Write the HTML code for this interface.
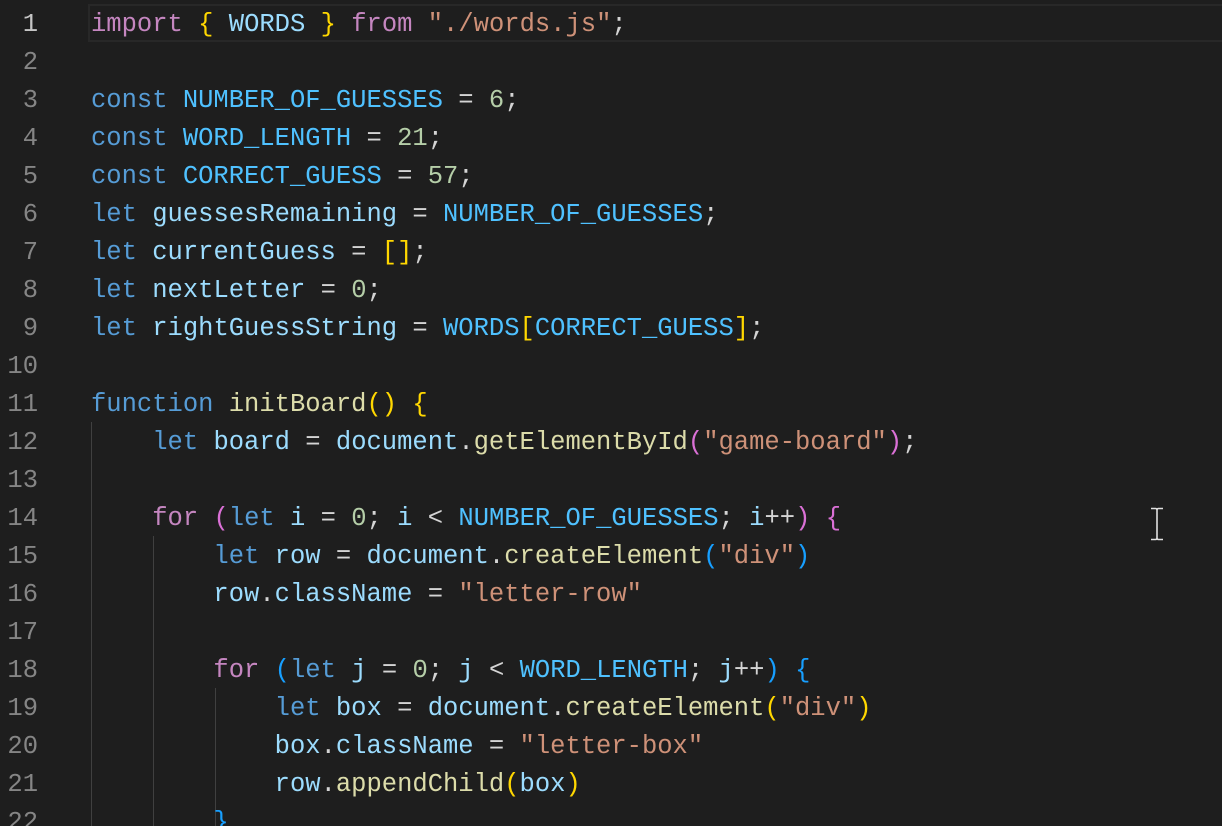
<!DOCTYPE html>
<html><head><meta charset="utf-8"><style>
html,body{margin:0;padding:0;background:#1e1e1e;width:1222px;height:826px;overflow:hidden}
.ed{position:relative;font-family:"Liberation Mono",monospace;font-size:25.5px;}
.l{position:absolute;left:0;height:38px;line-height:38px;white-space:pre;width:1222px;margin-top:2px}
.n{position:absolute;left:0;width:38px;text-align:right;color:#858585}
.c{position:absolute;left:91px;color:#d4d4d4}
.act{position:absolute;left:88px;top:4px;width:1140px;height:38px;border:2px solid #282828;box-sizing:border-box}
.g{position:absolute;width:1px;background:#404040}
.k{color:#569cd6}.p{color:#c586c0}.v{color:#9cdcfe}.C{color:#4fc1ff}.s{color:#ce9178}.nm{color:#b5cea8}.f{color:#dcdcaa}
.b1{color:#ffd700}.b2{color:#da70d6}.b3{color:#179fff}
</style></head><body><div class="ed">
<div class="act"></div>
<div class="g" style="left:91px;top:422px;height:404px"></div>
<div class="g" style="left:153px;top:536px;height:290px"></div>
<div class="g" style="left:215px;top:688px;height:138px"></div>
<div class="l" style="top:4px"><span class="n" style="color:#c6c6c6">1</span><span class="c"><span class="p">import</span> <span class="b1">{</span> <span class="v">WORDS</span> <span class="b1">}</span> <span class="p">from</span> <span class="s">"./words.js"</span>;</span></div>
<div class="l" style="top:42px"><span class="n">2</span></div>
<div class="l" style="top:80px"><span class="n">3</span><span class="c"><span class="k">const</span> <span class="C">NUMBER_OF_GUESSES</span> = <span class="nm">6</span>;</span></div>
<div class="l" style="top:118px"><span class="n">4</span><span class="c"><span class="k">const</span> <span class="C">WORD_LENGTH</span> = <span class="nm">21</span>;</span></div>
<div class="l" style="top:156px"><span class="n">5</span><span class="c"><span class="k">const</span> <span class="C">CORRECT_GUESS</span> = <span class="nm">57</span>;</span></div>
<div class="l" style="top:194px"><span class="n">6</span><span class="c"><span class="k">let</span> <span class="v">guessesRemaining</span> = <span class="C">NUMBER_OF_GUESSES</span>;</span></div>
<div class="l" style="top:232px"><span class="n">7</span><span class="c"><span class="k">let</span> <span class="v">currentGuess</span> = <span class="b1">[]</span>;</span></div>
<div class="l" style="top:270px"><span class="n">8</span><span class="c"><span class="k">let</span> <span class="v">nextLetter</span> = <span class="nm">0</span>;</span></div>
<div class="l" style="top:308px"><span class="n">9</span><span class="c"><span class="k">let</span> <span class="v">rightGuessString</span> = <span class="C">WORDS</span><span class="b1">[</span><span class="C">CORRECT_GUESS</span><span class="b1">]</span>;</span></div>
<div class="l" style="top:346px"><span class="n">10</span></div>
<div class="l" style="top:384px"><span class="n">11</span><span class="c"><span class="k">function</span> <span class="f">initBoard</span><span class="b1">()</span> <span class="b1">{</span></span></div>
<div class="l" style="top:422px"><span class="n">12</span><span class="c">    <span class="k">let</span> <span class="v">board</span> = <span class="v">document</span>.<span class="f">getElementById</span><span class="b2">(</span><span class="s">"game-board"</span><span class="b2">)</span>;</span></div>
<div class="l" style="top:460px"><span class="n">13</span></div>
<div class="l" style="top:498px"><span class="n">14</span><span class="c">    <span class="p">for</span> <span class="b2">(</span><span class="k">let</span> <span class="v">i</span> = <span class="nm">0</span>; <span class="v">i</span> &lt; <span class="C">NUMBER_OF_GUESSES</span>; <span class="v">i</span>++<span class="b2">)</span> <span class="b2">{</span></span></div>
<div class="l" style="top:536px"><span class="n">15</span><span class="c">        <span class="k">let</span> <span class="v">row</span> = <span class="v">document</span>.<span class="f">createElement</span><span class="b3">(</span><span class="s">"div"</span><span class="b3">)</span></span></div>
<div class="l" style="top:574px"><span class="n">16</span><span class="c">        <span class="v">row</span>.<span class="v">className</span> = <span class="s">"letter-row"</span></span></div>
<div class="l" style="top:612px"><span class="n">17</span></div>
<div class="l" style="top:650px"><span class="n">18</span><span class="c">        <span class="p">for</span> <span class="b3">(</span><span class="k">let</span> <span class="v">j</span> = <span class="nm">0</span>; <span class="v">j</span> &lt; <span class="C">WORD_LENGTH</span>; <span class="v">j</span>++<span class="b3">)</span> <span class="b3">{</span></span></div>
<div class="l" style="top:688px"><span class="n">19</span><span class="c">            <span class="k">let</span> <span class="v">box</span> = <span class="v">document</span>.<span class="f">createElement</span><span class="b1">(</span><span class="s">"div"</span><span class="b1">)</span></span></div>
<div class="l" style="top:726px"><span class="n">20</span><span class="c">            <span class="v">box</span>.<span class="v">className</span> = <span class="s">"letter-box"</span></span></div>
<div class="l" style="top:764px"><span class="n">21</span><span class="c">            <span class="v">row</span>.<span class="f">appendChild</span><span class="b1">(</span><span class="v">box</span><span class="b1">)</span></span></div>
<div class="l" style="top:802px"><span class="n">22</span><span class="c">        <span class="b3">}</span></span></div>
<svg style="position:absolute;left:1148px;top:507px" width="18" height="34"><path d="M3 1.5h4.5M10.5 1.5h4.5M9 3v28M3 32.5h4.5M10.5 32.5h4.5M7.5 1.5q1.5 0 1.5 1.5q0-1.5 1.5-1.5M7.5 32.5q1.5 0 1.5-1.5q0 1.5 1.5 1.5" stroke="#e0e0e0" stroke-width="1.6" fill="none"/></svg>
</div></body></html>
